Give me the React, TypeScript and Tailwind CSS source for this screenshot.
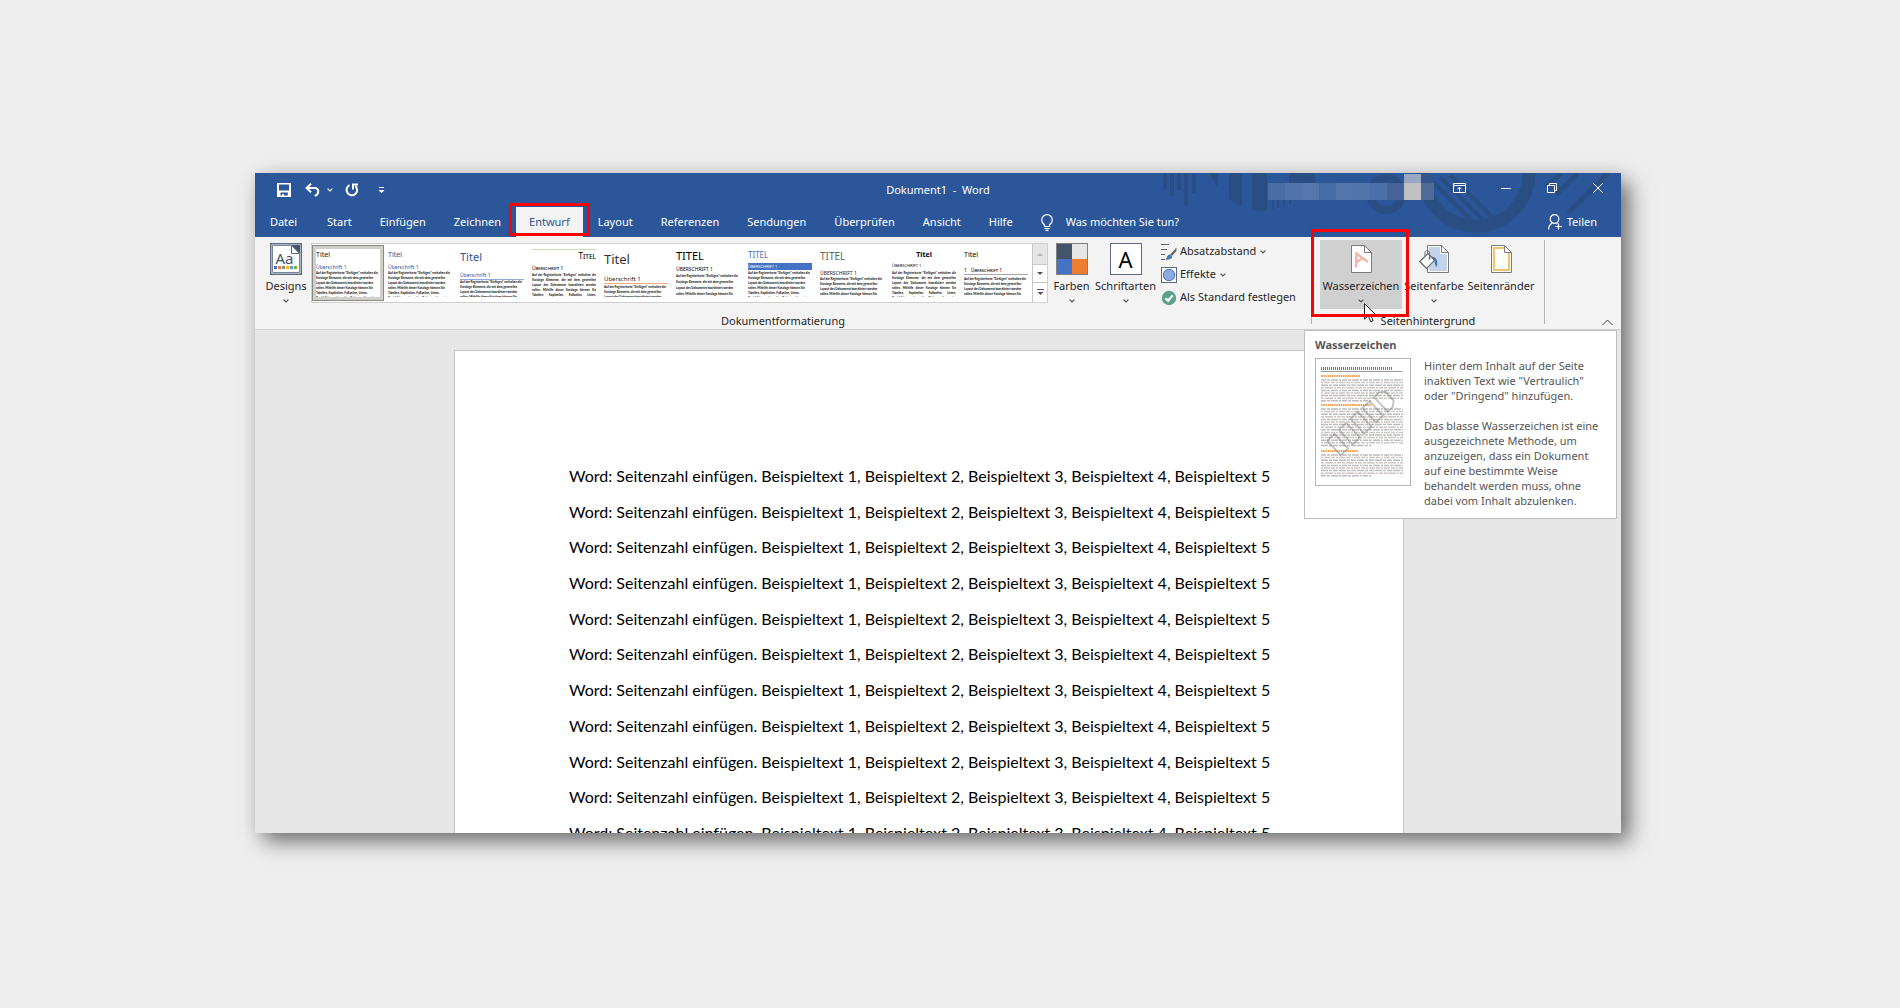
import type { ReactNode } from 'react';

function Chevron({ className = '' }: { className?: string }) {
  return (
    <svg width="6" height="4" viewBox="0 0 6 4" fill="none" stroke="currentColor" strokeWidth="1.2" className={className} aria-hidden="true">
      <path d="M0.6 0.6 L3 3 L5.4 0.6" />
    </svg>
  );
}

/* ---------- Title bar ---------- */

function HeaderArt() {
  return (
    <svg className="pointer-events-none absolute top-0 right-0" width="461" height="64" viewBox="0 0 461 64" fill="none" aria-hidden="true">
      <g fill="#284e84">
        <path d="M3 0h4v16h-4zM10 0h4v23h-4zM17 0h4v17h-4zM24 0h4v32h-4zM32 0h4v20h-4z" />
        <path d="M50 0h8v14q-5-5-8-14z" />
        <path d="M69 0h13v34q-7-3-13-8z" />
        <path d="M92 0h15v37q-8 1-15 0z" />
        <path d="M112 10h2v26h-2zM117 10h2v25h-2zM123 10h2v24h-2zM129 10h2v21h-2zM135 10h2v18h-2z" />
        <path d="M129 0h26v10h-26z" />
      </g>
      <g stroke="#284e84">
        <circle cx="226" cy="21" r="16" strokeWidth="8" />
        <circle cx="316" cy="0" r="53" strokeWidth="13" />
        <path d="M272 8l39 39M280 4l43 43M290 2l45 45" strokeWidth="4" />
        <path d="M387 14l14-14M396 22l22-22M408 40l40-40" strokeWidth="5" />
      </g>
    </svg>
  );
}

function AccountMosaic() {
  const cells = ['bg-[#4a6da5]', 'bg-[#5073a9]', 'bg-[#5577ad]', 'bg-[#466ca6]', 'bg-[#5376ad]', 'bg-[#5275aa]', 'bg-[#4b70a8]', 'bg-[#446499]'];
  return (
    <div className="absolute top-0 right-[187px] flex h-[27px] items-end" aria-hidden="true">
      {cells.map((c) => (
        <span key={c} className={`h-[17px] w-[17px] ${c}`} />
      ))}
      <span className="flex h-[26px] w-[17px] flex-col">
        <span className="h-[9px] bg-[#98a8c3]" />
        <span className="flex-1 bg-[#bfc0c4]" />
      </span>
      <span className="flex h-[26px] w-[13px] flex-col">
        <span className="h-[9px] bg-[#33568c]" />
        <span className="flex-1 bg-[#4d6a98]" />
      </span>
    </div>
  );
}

function WindowButton({ label, children }: { label: string; children: ReactNode }) {
  return (
    <button type="button" aria-label={label} className="flex h-[30px] w-[46px] items-center justify-center">
      <svg width="14" height="12" viewBox="0 0 14 12" fill="none" stroke="currentColor" aria-hidden="true">
        {children}
      </svg>
    </button>
  );
}

function TitleBar() {
  return (
    <div className="relative flex h-[34px] items-start justify-between text-white">
      <div className="flex h-[34px] items-center pl-[22px]">
        <button type="button" aria-label="Speichern">
          <svg width="14" height="14" viewBox="0 0 14 14" aria-hidden="true">
            <path fill="currentColor" fillRule="evenodd" d="M0 0h14v14H0zM2 1.5v6h10v-6zM3.5 9.5v3h1.5v-1.6h1.8v1.6h4v-3z" />
          </svg>
        </button>
        <button type="button" aria-label="Rückgängig" className="ml-[14px]">
          <svg width="15" height="14" viewBox="0 0 15 14" fill="none" stroke="currentColor" strokeWidth="2" aria-hidden="true">
            <path d="M6 0.8 L1.6 5 L6 9.2 M2 5h7.500c2.400 0 3.800 1.500 3.800 3.600c0 2-1.200 3.600-3.600 4.200" />
          </svg>
        </button>
        <button type="button" aria-label="Rückgängig-Verlauf" className="ml-[7px] flex h-3 items-center">
          <Chevron />
        </button>
        <button type="button" aria-label="Wiederholen" className="ml-[12px]">
          <svg width="14" height="14" viewBox="0 0 14 14" fill="none" stroke="currentColor" strokeWidth="2" aria-hidden="true">
            <path d="M4.500 2.200A5.300 5.300 0 1 0 10.400 3M8 6.500V1.500h5" />
          </svg>
        </button>
        <button type="button" aria-label="Symbolleiste anpassen" className="ml-[19px]">
          <svg width="7" height="7" viewBox="0 0 7 7" aria-hidden="true">
            <path fill="currentColor" d="M1 0h5v1H1zM0.500 3h6L3.500 6.200z" />
          </svg>
        </button>
      </div>
      <h1 className="absolute inset-x-0 top-0 text-center text-[11px] leading-[34px] font-normal whitespace-pre">Dokument1  -  Word</h1>
      <AccountMosaic />
      <div className="relative flex">
        <WindowButton label="Menübandoptionen">
          <path d="M0.500 1.500h12v9h-12zM0.500 3.500h12M6.500 9.500V5.500M4.500 7.200l2-2 2 2" />
        </WindowButton>
        <WindowButton label="Minimieren">
          <path d="M2 6.500h10" />
        </WindowButton>
        <WindowButton label="Wiederherstellen">
          <path d="M2.500 3.500h7v7h-7zM4.500 3.500v-2h7v7h-2" />
        </WindowButton>
        <WindowButton label="Schließen">
          <path d="M2 1l10 10M12 1L2 11" />
        </WindowButton>
      </div>
    </div>
  );
}

const TABS = ['Start', 'Einfügen', 'Zeichnen', 'Entwurf', 'Layout', 'Referenzen', 'Sendungen', 'Überprüfen', 'Ansicht', 'Hilfe'];

function TabBar() {
  return (
    <div className="relative flex h-[30px] items-stretch text-[11px] text-white">
      <nav className="flex gap-[2px]">
        <button type="button" className="w-[57px]">Datei</button>
        {TABS.map((tab) =>
          tab === 'Entwurf' ? (
            <button key={tab} type="button" aria-current="page" className="relative bg-[#f3f3f3] px-[13px] text-[#2b579a]">
              {tab}
              <span className="absolute -inset-x-[7px] -top-1 bottom-px border-[3px] border-[#ff0000]" />
            </button>
          ) : (
            <button key={tab} type="button" className="px-[13px]">{tab}</button>
          ),
        )}
      </nav>
      <label className="ml-[15px] flex items-center gap-[13px]">
        <svg width="12" height="17" viewBox="0 0 12 17" fill="none" stroke="currentColor" strokeWidth="1.200" aria-hidden="true">
          <path d="M3.500 12.500V11C1.500 9.500 0.700 8 0.700 6a5.300 5.300 0 0 1 10.600 0c0 2-.8 3.500-2.800 5v1.500zM3.500 14.500h5M4.500 16.300h3" />
        </svg>
        <input type="text" aria-label="Was möchten Sie tun?" placeholder="Was möchten Sie tun?" className="w-[130px] bg-transparent placeholder:text-white" />
      </label>
      <button type="button" className="mr-[24px] ml-auto flex items-center gap-[5px]">
        <svg width="14" height="16" viewBox="0 0 14 16" fill="none" stroke="currentColor" strokeWidth="1.200" aria-hidden="true">
          <circle cx="6.500" cy="5" r="4.300" />
          <path d="M0.600 15.500c0-3.500 1.600-5.500 4-6.500M8.500 9.200l1 .8M10.500 9.500v6M7.500 12.500h6.500" />
        </svg>
        Teilen
      </button>
    </div>
  );
}

/* ---------- Style gallery ---------- */

const SAMPLE =
  'Auf der Registerkarte "Einfügen" enthalten die Kataloge Elemente, die mit dem generellen Layout des Dokuments koordiniert werden sollen. Mithilfe dieser Kataloge können Sie Tabellen, Kopfzeilen, Fußzeilen, Listen, Deckblätter und sonstige Dokumentbausteine einfügen.';

type Preset = { title: string; heading: string; wrap?: string; titleCls: string; headCls: string; bodyCls: string };

const PRESETS: Preset[] = [
  { title: 'Titel', heading: 'Überschrift 1', titleCls: 'text-[7px] leading-[11px] text-[#222]', headCls: 'mt-[3px] text-[5px] leading-[8px] text-[#2f5496]', bodyCls: 'leading-[5px]' },
  { title: 'Titel', heading: 'Überschrift 1', titleCls: 'text-[7px] leading-[11px] text-[#2f5496]', headCls: 'mt-[3px] text-[5px] leading-[8px] text-[#2f5496]', bodyCls: 'leading-[5px]' },
  { title: 'Titel', heading: 'Überschrift 1', titleCls: 'text-[11px] leading-[16px] text-[#2f5496]', headCls: 'mt-[6px] border-b border-[#8eaadb] text-[5px] leading-[8px] text-[#2f5496]', bodyCls: 'leading-[5px]' },
  { title: 'Titel', heading: 'Überschrift 1', wrap: 'border-t border-[#c5e0b3]', titleCls: 'text-right text-[8px] leading-[11px] [font-variant:small-caps]', headCls: 'mt-[3px] text-[5px] leading-[8px] [font-variant:small-caps]', bodyCls: 'mt-px text-justify leading-[5px]' },
  { title: 'Titel', heading: 'Überschrift 1', titleCls: 'text-[13px] leading-[20px] text-[#333]', headCls: 'mt-[6px] border-b border-[#f4b083] text-[6px] leading-[8px] text-[#222]', bodyCls: 'mt-px leading-[5px]' },
  { title: 'TITEL', heading: 'ÜBERSCHRIFT 1', titleCls: 'text-[11px] leading-[14px]', headCls: 'mt-[2px] text-[5px] leading-[8px]', bodyCls: 'leading-[6px]' },
  { title: 'TITEL', heading: 'ÜBERSCHRIFT 1', titleCls: 'text-[8px] leading-[11px] text-[#4472c4]', headCls: 'mt-[3px] bg-[#4472c4] text-[4px] leading-[7px] text-white', bodyCls: 'mt-px leading-[5px]' },
  { title: 'TITEL', heading: 'ÜBERSCHRIFT 1', titleCls: 'text-[10px] leading-[14px] text-[#666]', headCls: 'mt-[6px] text-[5px] leading-[8px] text-[#222]', bodyCls: 'leading-[5px]' },
  { title: 'Titel', heading: 'ÜBERSCHRIFT 1', titleCls: 'text-center text-[7px] leading-[11px] font-bold', headCls: 'mt-[2px] text-[4px] leading-[8px]', bodyCls: 'mt-px text-justify leading-[5px]' },
  { title: 'Titel', heading: '1   Überschrift 1', titleCls: 'text-[7px] leading-[11px]', headCls: 'mt-[6px] border-b border-[#a6a6a6] text-[5px] leading-[8px] [font-variant:small-caps]', bodyCls: 'mt-[2px] leading-[5px]' },
];

function Gallery() {
  return (
    <div className="flex h-[60px] border border-[#d0cece] bg-white">
      {PRESETS.map((p, i) => (
        <button
          key={i}
          type="button"
          aria-label={`Formatvorlagensatz ${i + 1}`}
          className={i === 0 ? 'mt-px h-[56px] w-[72px] border border-[#8a8a85] bg-[#d0cfcb] p-[3px]' : 'mt-px h-[56px] w-[72px] p-[4px]'}
        >
          <span className={`block h-[48px] overflow-hidden bg-white text-left text-black ${p.wrap ?? ''}`}>
            <span className={`block ${p.titleCls}`}>{p.title}</span>
            <span className={`block whitespace-pre ${p.headCls}`}>{p.heading}</span>
            <span className={`block font-[Lato,sans-serif] text-[3px] font-black text-[#222] ${p.bodyCls}`}>{SAMPLE}</span>
          </span>
        </button>
      ))}
      <div className="flex w-[15px] flex-col border-l border-[#c6c6c6] text-[#555]">
        <button type="button" aria-label="Nach oben" className="flex h-[20px] items-center justify-center bg-[#e5e5e5] text-[#b5b5b5]">
          <svg width="6" height="3" viewBox="0 0 6 3" fill="currentColor" aria-hidden="true"><path d="M0 3L3 0l3 3z" /></svg>
        </button>
        <button type="button" aria-label="Nach unten" className="flex h-[19px] items-center justify-center border-y border-[#c6c6c6]">
          <svg width="6" height="3" viewBox="0 0 6 3" fill="currentColor" aria-hidden="true"><path d="M0 0l3 3 3-3z" /></svg>
        </button>
        <button type="button" aria-label="Weitere" className="flex flex-1 items-center justify-center">
          <svg width="7" height="7" viewBox="0 0 7 7" fill="currentColor" aria-hidden="true"><path d="M0 0h7v1H0zM0.500 3l3 3 3-3z" /></svg>
        </button>
      </div>
    </div>
  );
}

/* ---------- Ribbon ---------- */

function BigButton({ label, icon, menu = true, className }: { label: string; icon: ReactNode; menu?: boolean; className: string }) {
  return (
    <button type="button" className={`flex h-[69px] flex-col items-center pt-[3px] ${className}`}>
      <span className="flex h-[32px] items-center justify-center">{icon}</span>
      <span className="mt-[3px] leading-4 whitespace-nowrap">{label}</span>
      {menu && <Chevron className="mt-[5px] text-[#555]" />}
    </button>
  );
}

function SmallButton({ label, icon, menu = true }: { label: string; icon: ReactNode; menu?: boolean }) {
  return (
    <button type="button" className="flex h-[23px] items-center gap-[3px]">
      {icon}
      <span className="whitespace-nowrap">{label}</span>
      {menu && <Chevron className="ml-px text-[#555]" />}
    </button>
  );
}

const DesignsIcon = (
  <svg width="32" height="32" viewBox="0 0 32 32" aria-hidden="true">
    <rect x="0.750" y="0.750" width="30.500" height="30.500" fill="#fff" stroke="#5b6b84" strokeWidth="1.500" />
    <path d="M2.500 2.500H21l8.500 8.500v18.500h-27z" fill="#fff" stroke="#7b8799" />
    <path d="M21.500 2h8.500v8.500z" fill="#44546a" />
    <path d="M21.500 2.500v8h8z" fill="#fff" stroke="#5b6b84" />
    <text x="5.500" y="21" fontSize="15" fontFamily="Noto Sans, sans-serif" fill="#44546a">Aa</text>
    <path fill="#4472c4" d="M4 23h3v3H4z" />
    <path fill="#ed7d31" d="M8 23h3v3H8z" />
    <path fill="#8d8d8d" d="M12 23h3v3h-3z" />
    <path fill="#ffc000" d="M16 23h3v3h-3z" />
    <path fill="#5b9bd5" d="M20 23h3v3h-3z" />
    <path fill="#70ad47" d="M24 23h3v3h-3z" />
  </svg>
);

const ColorsIcon = (
  <svg width="32" height="32" viewBox="0 0 32 32" aria-hidden="true">
    <path fill="#44546a" d="M0 0h16v16H0z" />
    <path fill="#e7e6e6" d="M16 0h16v16H16z" />
    <path fill="#4472c4" d="M0 16h16v16H0z" />
    <path fill="#ed7d31" d="M16 16h16v16H16z" />
    <rect x="0.500" y="0.500" width="31" height="31" fill="none" stroke="#7f7f7f" />
  </svg>
);

const FontsIcon = (
  <span className="flex h-8 w-8 items-center justify-center border border-[#5b6b84] bg-white text-[22px] leading-8 text-black">A</span>
);

const SpacingIcon = (
  <svg width="16" height="16" viewBox="0 0 16 16" aria-hidden="true">
    <path d="M0 0.500h8M0 5.500h6M0 10.500h4M0 15.500h4" stroke="#666" fill="none" />
    <path d="M15.500 3.500v3.500L11 12l-1.800-1.600z" fill="#6a6a6a" />
    <path d="M8.800 10.300l2.400 2.200c-.2 2-2.200 3.500-7.200 3.300 2-.8 1.600-4.600 4.800-5.500z" fill="#3f78b8" />
  </svg>
);

const EffectsIcon = (
  <svg width="16" height="16" viewBox="0 0 16 16" aria-hidden="true">
    <rect x="0.500" y="0.500" width="15" height="15" fill="#fff" stroke="#5b6b84" />
    <circle cx="8" cy="8" r="5.700" fill="#8faadc" stroke="#4472c4" />
  </svg>
);

const DefaultIcon = (
  <svg width="16" height="16" viewBox="0 0 16 16" aria-hidden="true">
    <circle cx="8" cy="8" r="7.200" fill="#5ba088" />
    <path d="M4.500 8.200l2.600 2.600 4.600-5.400" fill="none" stroke="#fff" strokeWidth="2.200" />
  </svg>
);

const WatermarkIcon = (
  <svg width="21" height="28" viewBox="0 0 21 28" aria-hidden="true">
    <path d="M0.500 0.500h13l7 7v20H0.500z" fill="#fff" stroke="#7a7a7a" />
    <path d="M13.500 0.500v7h7" fill="none" stroke="#7a7a7a" />
    <path d="M5 22.500L5.500 8.500 17 17M5.300 17.500l6.500-4.500" fill="none" stroke="#f2b5a7" strokeWidth="2.400" />
  </svg>
);

const PageColorIcon = (
  <svg width="30" height="28" viewBox="0 0 30 28" aria-hidden="true">
    <path d="M8.500 0.500h14l7 7v20h-21z" fill="#fff" stroke="#7a7a7a" />
    <path d="M10 2h11v7h7v17H10z" fill="#c3d4ea" />
    <path d="M22.500 0.500v7h7z" fill="#fff" stroke="#7a7a7a" />
    <path d="M12 11.500c5 .5 7 3 6 10.500-2-1-2.500-4-2.500-7z" fill="#3f78b8" />
    <path d="M0.700 16.500L9 8.500l6.500 6.800-8 8z" fill="#fff" stroke="#6a6a6a" strokeWidth="1.200" />
    <path d="M6 11V7.500c0-2.600 4.500-2.600 4.500 0V13" fill="none" stroke="#6a6a6a" />
    <circle cx="10.500" cy="13.500" r="1" fill="#6a6a6a" />
  </svg>
);

const PageBordersIcon = (
  <svg width="21" height="28" viewBox="0 0 21 28" aria-hidden="true">
    <path d="M0.500 0.500h13l7 7v20H0.500z" fill="#fff" stroke="#7a7a7a" />
    <path d="M13 3H3v22h15V8" fill="none" stroke="#f0c36d" strokeWidth="2.200" />
    <path d="M13.500 0.500v7h7z" fill="#fff" stroke="#7a7a7a" />
  </svg>
);

const DASHES = ['5 1 3 1 7 1 2 1', '2 1 6 1 4 1', '7 1 3 1 5 1', '3 1 8 1 2 1 4 1'];

function TooltipPreview() {
  const rows = (from: number, count: number) =>
    Array.from({ length: count }, (_, i) => (
      <path key={`${from}-${i}`} d={`M6 ${from + i * 2.6}H${i === count - 1 ? 56 : 88}`} stroke={i % 2 ? '#cdc4c2' : '#bcbcc0'} strokeWidth="1.500" strokeDasharray={DASHES[i % 4]} />
    ));
  return (
    <svg width="96" height="128" viewBox="0 0 96 128" fill="none" className="shrink-0" aria-hidden="true">
      <rect x="0.500" y="0.500" width="95" height="127" fill="#fff" stroke="#b5b5b5" />
      <path d="M6 10.500h71" stroke="#777" strokeWidth="3" strokeDasharray="1 1" />
      <path d="M6 13.500h81" stroke="#999" />
      <path d="M6 18h39M6 47h50M6 93h37" stroke="#eda04f" strokeWidth="2" strokeDasharray="1.500 0.700" />
      {rows(22, 9)}
      {rows(51, 15)}
      {rows(97, 9)}
      <g stroke="#777" strokeOpacity="0.450" strokeWidth="1.800" transform="translate(19 90) rotate(-43)">
        <rect x="0" y="-10" width="10" height="20" />
        <rect x="16" y="-10" width="10" height="20" />
        <rect x="32" y="-10" width="10" height="20" />
        <rect x="48" y="-10" width="10" height="20" />
        <path d="M64-10h7l5 4v12l-5 4h-7z" />
      </g>
    </svg>
  );
}

function Tooltip() {
  return (
    <div role="tooltip" className="absolute top-[90px] -left-[16px] z-20 w-[313px] border border-[#bebebe] bg-white px-[10px] pt-[6px] pb-[10px] text-[11px] text-[#555]">
      <p className="leading-4 font-bold">Wasserzeichen</p>
      <div className="mt-[5px] flex gap-[13px]">
        <TooltipPreview />
        <div className="w-[182px] leading-[15px]">
          <p>Hinter dem Inhalt auf der Seite inaktiven Text wie "Vertraulich" oder "Dringend" hinzufügen.</p>
          <p className="mt-[15px]">Das blasse Wasserzeichen ist eine ausgezeichnete Methode, um anzuzeigen, dass ein Dokument auf eine bestimmte Weise behandelt werden muss, ohne dabei vom Inhalt abzulenken.</p>
        </div>
      </div>
    </div>
  );
}

function WatermarkControl() {
  return (
    <div className="relative">
      <BigButton label="Wasserzeichen" icon={WatermarkIcon} className="w-[82px] bg-[#d0d0d0]" />
      <svg width="13" height="20" viewBox="0 0 13 20" className="absolute top-[63px] left-[44px]" aria-hidden="true">
        <path d="M0.500 0.700v15.500l3.700-3.500 2.600 6 2.300-1-2.500-5.900h5.300z" fill="#fff" stroke="#222" />
      </svg>
      <span className="pointer-events-none absolute -top-[11px] -right-[7px] -bottom-[8px] -left-[9px] border-[3px] border-[#ff0000]" />
      <Tooltip />
    </div>
  );
}

function Ribbon() {
  return (
    <div className="relative flex h-[93px] border-b border-[#d0d0d0] bg-[#f3f3f3] pt-[3px] text-[11px] text-[#262626]">
      <section className="flex flex-col">
        <div className="flex pl-[8px]">
          <BigButton label="Designs" icon={DesignsIcon} className="w-[46px]" />
          <div className="mt-[3px] ml-[2px]">
            <Gallery />
          </div>
          <BigButton label="Farben" icon={ColorsIcon} className="w-[47px]" />
          <BigButton label="Schriftarten" icon={FontsIcon} className="w-[61px]" />
          <div className="ml-[5px] w-[150px]">
            <SmallButton label="Absatzabstand" icon={SpacingIcon} />
            <SmallButton label="Effekte" icon={EffectsIcon} />
            <SmallButton label="Als Standard festlegen" icon={DefaultIcon} menu={false} />
          </div>
        </div>
        <h2 className="mt-[4px] text-center leading-4">Dokumentformatierung</h2>
      </section>
      <span className="h-[84px] w-px bg-[#b5b5b5]" />
      <section className="flex flex-col">
        <div className="flex px-[8px]">
          <WatermarkControl />
          <BigButton label="Seitenfarbe" icon={PageColorIcon} className="w-[64px]" />
          <BigButton label="Seitenränder" icon={PageBordersIcon} menu={false} className="w-[70px]" />
        </div>
        <h2 className="mt-[4px] text-center leading-4">Seitenhintergrund</h2>
      </section>
      <span className="h-[84px] w-px bg-[#b5b5b5]" />
      <button type="button" aria-label="Menüband reduzieren" className="absolute right-[8px] bottom-[3px]">
        <svg width="11" height="7" viewBox="0 0 11 7" fill="none" stroke="#444" aria-hidden="true">
          <path d="M0.500 6l5-5 5 5" />
        </svg>
      </button>
    </div>
  );
}

/* ---------- Document ---------- */

const LINES = Array.from({ length: 11 }, () => 'Word: Seitenzahl einfügen. Beispieltext 1, Beispieltext 2, Beispieltext 3, Beispieltext 4, Beispieltext 5');

function DocumentArea() {
  return (
    <main className="flex-1 overflow-hidden bg-[#e6e6e6] pt-5 pr-[18px]">
      <article className="mx-auto w-[950px] border border-[#c6c6c6] bg-white px-[114px] pt-[107px] pb-24">
        <div className="grid h-[393px] auto-rows-fr items-center font-[Lato,sans-serif] text-[16px] leading-5 text-black">
          {LINES.map((line, i) => (
            <p key={i} className="whitespace-nowrap">{line}</p>
          ))}
        </div>
      </article>
    </main>
  );
}

export default function App() {
  return (
    <div className="flex h-screen bg-[#eeeeee] pt-[173px] pr-[279px] pb-[175px] pl-[255px] font-['Noto_Sans',sans-serif]">
      <div className="flex min-w-0 flex-1 flex-col shadow-[9px_9px_20px_rgba(0,0,0,0.5),0_0_16px_rgba(0,0,0,0.08)]">
        <header className="relative bg-[#2b579a]">
          <HeaderArt />
          <TitleBar />
          <TabBar />
        </header>
        <Ribbon />
        <DocumentArea />
      </div>
    </div>
  );
}
